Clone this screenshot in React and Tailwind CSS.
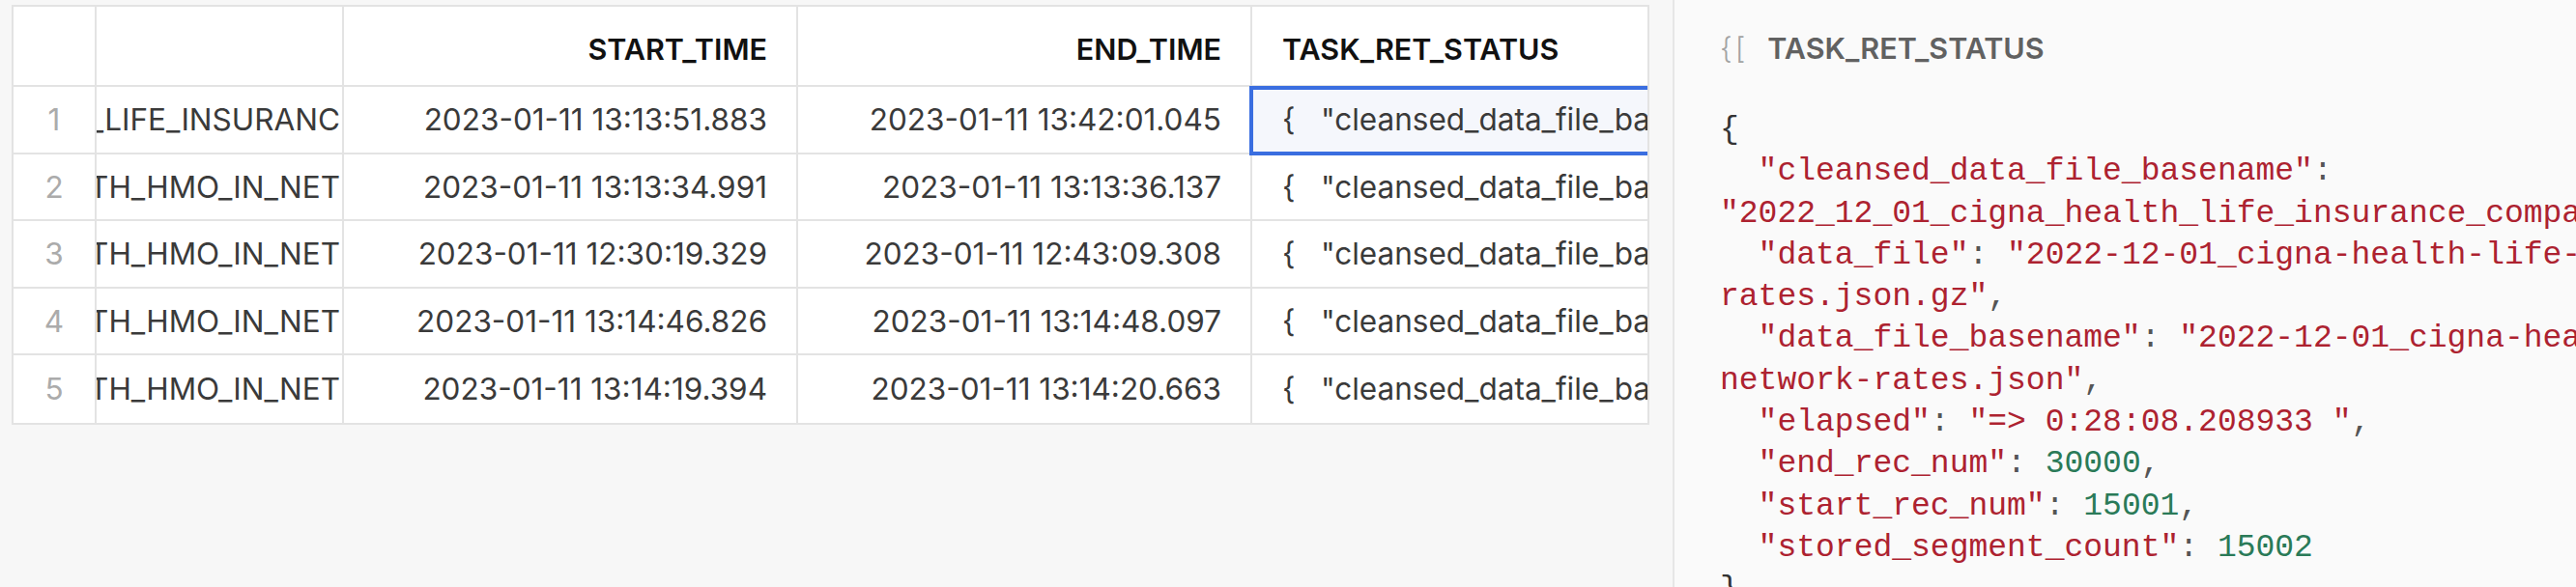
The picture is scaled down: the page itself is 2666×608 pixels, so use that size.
const rows = [
  { n: 1, name: 'CIGNA_HEALTH_LIFE_INSURANC', start: '2023-01-11 13:13:51.883', end: '2023-01-11 13:42:01.045' },
  { n: 2, name: 'CIGNA_HEALTH_HMO_IN_NET', start: '2023-01-11 13:13:34.991', end: '2023-01-11 13:13:36.137' },
  { n: 3, name: 'CIGNA_HEALTH_HMO_IN_NET', start: '2023-01-11 12:30:19.329', end: '2023-01-11 12:43:09.308' },
  { n: 4, name: 'CIGNA_HEALTH_HMO_IN_NET', start: '2023-01-11 13:14:46.826', end: '2023-01-11 13:14:48.097' },
  { n: 5, name: 'CIGNA_HEALTH_HMO_IN_NET', start: '2023-01-11 13:14:19.394', end: '2023-01-11 13:14:20.663' },
];

const taskText = '{   "cleansed_data_file_basename": "2022_12_01_cigna_health_life_insurance_company_cigna_hmo_in_network_rates"';

const Key = ({ children }) => <span className="text-[#ad2230]">{children}</span>;
const Str = ({ children }) => <span className="text-[#ad2230]">{children}</span>;
const Num = ({ children }) => <span className="text-[#2a7a58]">{children}</span>;
const P = ({ children }) => <span className="text-[#555]">{children}</span>;

const App = () => {
  return (
    <div className="flex h-[608px] w-[2666px] overflow-hidden bg-[#f7f7f7] font-['Inter',sans-serif]">
      {/* results table */}
      <div className="w-[1731px] shrink-0 pl-[12px] pt-[5px]">
        <div className="w-[1695px] overflow-hidden border-2 border-[#e3e3e3] bg-white text-[31.5px]">
          <div className="flex h-[83px] border-b-2 border-[#e3e3e3] text-[30.5px] font-semibold text-[#111]">
            <div className="w-[86px] shrink-0 border-r-2 border-[#e3e3e3]" />
            <div className="w-[256px] shrink-0 border-r-2 border-[#e3e3e3]" />
            <div className="flex w-[470px] shrink-0 items-center justify-end border-r-2 border-[#e3e3e3] pr-[30px] pt-[6px]">
              START_TIME
            </div>
            <div className="flex w-[470px] shrink-0 items-center justify-end border-r-2 border-[#e3e3e3] pr-[30px] pt-[6px]">
              END_TIME
            </div>
            <div className="flex w-[800px] shrink-0 items-center pl-[31px] pt-[6px]">TASK_RET_STATUS</div>
          </div>

          {rows.map((r, i) => (
            <div
              key={r.n}
              className={`flex h-[69.5px] text-[#3a3a3a] ${i < rows.length - 1 ? 'border-b-2 border-[#e3e3e3]' : ''}`}
            >
              <div className="flex w-[86px] shrink-0 items-center justify-center border-r-2 border-[#e3e3e3] text-[#ababab]">
                {r.n}
              </div>
              <div className="flex w-[256px] shrink-0 items-center justify-end overflow-hidden whitespace-nowrap border-r-2 border-[#e3e3e3] pr-[2px]">
                <span className="shrink-0">{r.name}</span>
              </div>
              <div className="flex w-[470px] shrink-0 items-center justify-end border-r-2 border-[#e3e3e3] pr-[30px]">
                {r.start}
              </div>
              <div className="flex w-[470px] shrink-0 items-center justify-end border-r-2 border-[#e3e3e3] pr-[30px]">
                {r.end}
              </div>
              <div className={`relative flex w-[800px] shrink-0 items-center whitespace-pre pl-[31px] ${i === 0 ? 'bg-[#f5f7fc]' : ''}`}>
                {i === 0 && (
                  <div className="absolute -left-[3px] -top-[1px] -bottom-[3px] -right-[10px] border-4 border-[#3a6ee0]" />
                )}
                {taskText}
              </div>
            </div>
          ))}
        </div>
      </div>

      {/* detail panel */}
      <div className="flex-1 overflow-hidden border-l-2 border-[#e6e6e6] bg-[#fafafa] pl-[47px] pt-[30px]">
        <div className="flex h-[40px] items-center gap-[20px] text-[30.5px]">
          <span className="font-light tracking-[3px] text-[#a3a3a3]">{'{['}</span>
          <span className="font-semibold text-[#616161]">TASK_RET_STATUS</span>
        </div>
        <pre className="mt-[43px] whitespace-pre font-['Liberation_Mono',monospace] text-[33px] leading-[43.3px] text-[#333]">
          <div>{'{'}</div>
          <div>
            {'  '}<Key>"cleansed_data_file_basename"</Key><P>:</P>
          </div>
          <div>
            <Str>"2022_12_01_cigna_health_life_insurance_company_cigna_hmo_in_network_rates"</Str><P>,</P>
          </div>
          <div>
            {'  '}<Key>"data_file"</Key><P>: </P><Str>"2022-12-01_cigna-health-life-insurance-company_cigna-hmo-in-</Str>
          </div>
          <div>
            <Str>rates.json.gz"</Str><P>,</P>
          </div>
          <div>
            {'  '}<Key>"data_file_basename"</Key><P>: </P><Str>"2022-12-01_cigna-health-life-insurance-company_in-</Str>
          </div>
          <div>
            <Str>network-rates.json"</Str><P>,</P>
          </div>
          <div>
            {'  '}<Key>"elapsed"</Key><P>: </P><Str>"=&gt; 0:28:08.208933 "</Str><P>,</P>
          </div>
          <div>
            {'  '}<Key>"end_rec_num"</Key><P>: </P><Num>30000</Num><P>,</P>
          </div>
          <div>
            {'  '}<Key>"start_rec_num"</Key><P>: </P><Num>15001</Num><P>,</P>
          </div>
          <div>
            {'  '}<Key>"stored_segment_count"</Key><P>: </P><Num>15002</Num>
          </div>
          <div>{'}'}</div>
        </pre>
      </div>
    </div>
  );
};

export default App;
